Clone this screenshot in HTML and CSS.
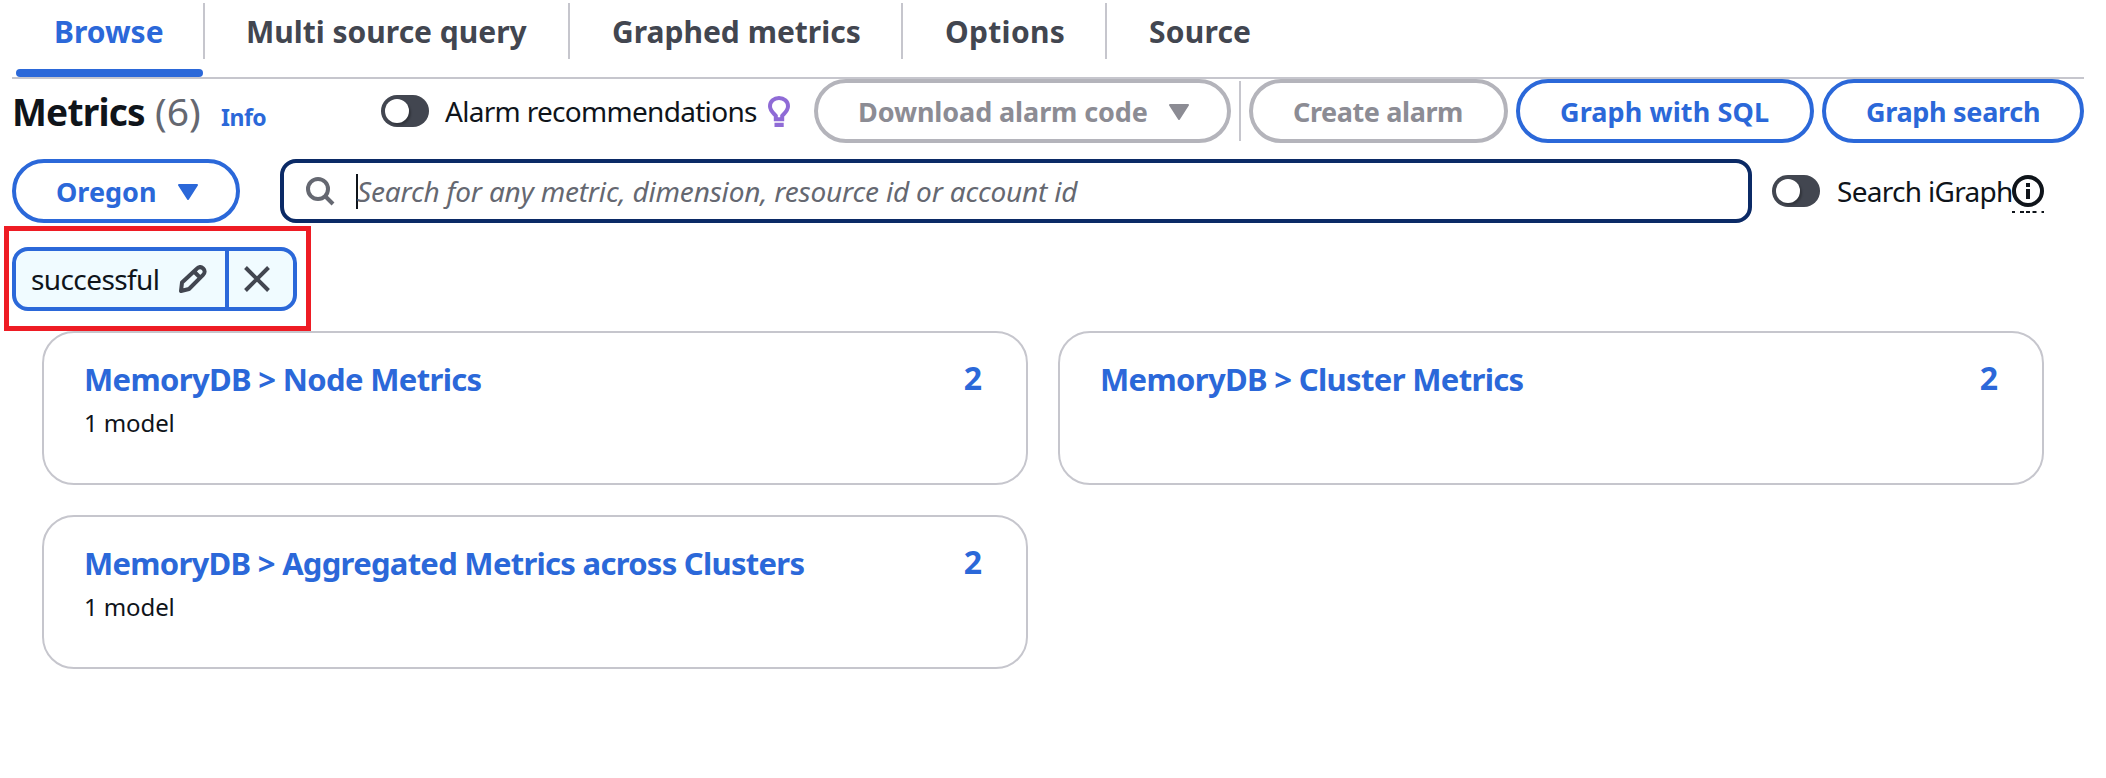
FILE: index.html
```html
<!DOCTYPE html>
<html lang="en">
<head>
<meta charset="utf-8">
<title>Metrics</title>
<link rel="stylesheet" href="styles.css">
</head>
<body>
<nav class="tabs">
  <a class="tab tab-browse active">Browse</a>
  <a class="tab tab-multi">Multi source query</a>
  <a class="tab tab-graphed">Graphed metrics</a>
  <a class="tab tab-options">Options</a>
  <a class="tab tab-source">Source</a>
</nav>
<header class="toolbar">
  <h1 class="heading"><span class="title">Metrics</span><span class="count">(6)</span><a class="info">Info</a></h1>
  <span class="toggle"><span class="knob"></span></span>
  <span class="label alarm-label">Alarm recommendations</span>
  <svg class="bulb" viewBox="0 0 22 31"><path d="M7.8 23.2v-3.4C5.6 17.3 2 14.8 2 10.3 2 5.4 6 2 11 2s9 3.4 9 8.3c0 4.5-3.600 7-5.800 9.500v3.400z" fill="none" stroke="#8f6bd6" stroke-width="4"/><path d="M6 19.600 11 23l5-3.400v5H6zM6.500 26.800h9.200v4.200H6.500z" fill="#8f6bd6"/></svg>
  <button class="btn disabled download">Download alarm code<svg class="caret" viewBox="0 0 20 16"><path d="M1 1h18l-9 14z"/></svg></button>
  <span class="divider"></span>
  <button class="btn disabled create">Create alarm</button>
  <button class="btn sql">Graph with SQL</button>
  <button class="btn search-btn">Graph search</button>
</header>
<section class="searchbar">
  <button class="btn region">Oregon<svg class="caret" viewBox="0 0 20 16"><path d="M1 1h18l-9 14z"/></svg></button>
  <div class="field">
    <svg class="lens" viewBox="0 0 29 29"><circle cx="12" cy="12" r="10" fill="none" stroke="#656871" stroke-width="4"/><path d="M18.500 18.500l8.500 8.500" stroke="#656871" stroke-width="4"/></svg>
    <span class="cursor"></span>
    <span class="placeholder">Search for any metric, dimension, resource id or account id</span>
  </div>
  <span class="toggle igraph-toggle"><span class="knob"></span></span>
  <span class="label igraph-label">Search iGraph</span>
  <span class="hint"><svg class="hint-icon" viewBox="0 0 32 32"><circle cx="16" cy="16" r="14" fill="none" stroke="#0f141a" stroke-width="4"/><path d="M14 8h4v4h-4zM14 14h4v10h-4z" fill="#0f141a"/></svg><svg class="dash" viewBox="0 0 32 2"><path d="M0 1h3M8 1h4M14 1h4M20.500 1h4M29.500 1h2.500" stroke="#0f141a" stroke-width="2"/></svg></span>
</section>
<section class="filters">
  <div class="chip">
    <span class="chip-text">successful</span>
    <svg class="pencil" viewBox="0 0 28 28"><path d="M2 26l1-8.500L17.800 3.700c2-2 4.400-2 6.400-.2 2 2 1.800 4.500-.1 6.400L10 24z M15 6.500l6.500 6.500" fill="none" stroke="#424650" stroke-width="4" stroke-linejoin="round"/></svg>
    <span class="remove"><svg class="cross" viewBox="0 0 26 26"><path d="M1.500 1.500l23 23M24.500 1.500l-23 23" stroke="#424650" stroke-width="4"/></svg></span>
  </div>
</section>
<main class="cards">
  <article class="card">
    <div class="card-main"><a class="card-title">MemoryDB &gt; Node Metrics</a><p class="sub">1 model</p></div>
    <span class="num">2</span>
  </article>
  <article class="card">
    <div class="card-main"><a class="card-title">MemoryDB &gt; Cluster Metrics</a></div>
    <span class="num">2</span>
  </article>
  <article class="card">
    <div class="card-main"><a class="card-title card-title-long">MemoryDB &gt; Aggregated Metrics across Clusters</a><p class="sub">1 model</p></div>
    <span class="num">2</span>
  </article>
</main>
</body>
</html>
```
FILE: styles.css
```css
* { box-sizing: border-box; }
body {
  margin: 0;
  background: #fff;
  color: #0f141a;
  font-family: "Noto Sans", "Open Sans", sans-serif;
  white-space: nowrap;
}
svg { display: block; flex: none; }

.tabs {
  display: flex;
  height: 79px;
  margin: 0 22px 0 12px;
  padding-top: 3px;
  border-bottom: 2px solid #c6c6cd;
}
.tab {
  position: relative;
  height: 56px;
  padding: 1px 0 0 41px;
  border-right: 2px solid #c6c6cd;
  font-size: 30px;
  font-weight: 700;
  line-height: 56px;
  color: #424650;
}
.tab-browse { width: 193px; padding-left: 42px; }
.tab-multi { width: 365px; }
.tab-graphed { width: 333px; padding-left: 42px; }
.tab-options { width: 204px; padding-left: 42px; letter-spacing: 0.3px; }
.tab-source { border: 0; padding-left: 42px; letter-spacing: 0.2px; }
.active { color: #2b68d9; }
.active::after {
  content: "";
  position: absolute;
  left: 4px;
  top: 66px;
  width: 187px;
  height: 8px;
  border-radius: 4px;
  background: #2b68d9;
}

.toolbar {
  display: flex;
  align-items: center;
  height: 64px;
  padding-left: 11px;
}
.heading {
  display: flex;
  align-items: baseline;
  width: 370px;
  margin: 0;
  padding-top: 5px;
  line-height: 59px;
}
.title { width: 143px; padding-left: 1px; font-size: 37px; letter-spacing: -0.8px; }
.count { width: 67px; padding-left: 1px; font-size: 39px; font-weight: 400; color: #656871; }
.info { font-size: 23px; letter-spacing: -0.5px; color: #2b68d9; }

.toggle {
  flex: none;
  width: 48px;
  height: 32px;
  padding: 4px;
  border-radius: 16px;
  background: #424650;
}
.knob {
  display: block;
  width: 24px;
  height: 24px;
  border-radius: 50%;
  background: #fff;
  box-shadow: 2px 2px 2px rgba(0, 0, 0, .25);
}
.label { font-size: 28px; letter-spacing: -0.7px; line-height: 64px; }
.alarm-label { width: 323px; margin-left: 16px; }
.bulb { width: 22px; height: 31px; }

.btn {
  display: flex;
  flex: none;
  align-items: center;
  height: 64px;
  margin: 0;
  padding: 1px 0 0 40px;
  border: 4px solid #2b68d9;
  border-radius: 32px;
  background: #fff;
  color: #2b68d9;
  font: 700 27px/55px "Noto Sans", "Open Sans", sans-serif;
}
.caret {
  width: 20px;
  height: 16px;
  fill: currentColor;
  stroke: currentColor;
  stroke-width: 2;
  stroke-linejoin: round;
}
.disabled { border-color: #b4b4bb; color: #8c8c94; }
.download { width: 417px; margin-left: 24px; letter-spacing: -0.1px; }
.download .caret { margin-left: 21px; }
.divider { width: 2px; height: 60px; margin: 0 8px; background: #c6c6cd; }
.create { width: 259px; letter-spacing: -0.4px; }
.sql { width: 298px; margin-left: 8px; letter-spacing: 0.1px; }
.search-btn { width: 262px; margin-left: 8px; letter-spacing: -0.3px; }

.searchbar {
  display: flex;
  align-items: center;
  height: 64px;
  margin: 16px 0 0 12px;
}
.region { width: 228px; }
.region .caret { margin-left: 21px; }
.field {
  display: flex;
  align-items: center;
  width: 1472px;
  height: 64px;
  margin-left: 40px;
  padding-left: 22px;
  border: 4px solid #0b2a66;
  border-radius: 16px;
}
.lens { width: 29px; height: 29px; }
.cursor { width: 2px; height: 35px; margin-left: 21px; background: #0f141a; }
.placeholder {
  margin-left: -1px;
  font-size: 28px;
  font-style: italic;
  letter-spacing: -0.18px;
  line-height: 56px;
  color: #656871;
}
.igraph-toggle { margin-left: 20px; }
.igraph-label { width: 175px; margin-left: 17px; }
.hint { display: flex; flex-direction: column; gap: 4px; padding-top: 6px; }
.hint-icon { width: 32px; height: 32px; }
.dash { width: 32px; height: 2px; }

.filters {
  width: 307px;
  height: 105px;
  margin: 3px 0 0 4px;
  padding: 16px 0 0 3px;
  border: 5px solid #ee1c24;
}
.chip {
  display: flex;
  align-items: center;
  width: 285px;
  height: 64px;
  padding-left: 15px;
  border: 4px solid #2b68d9;
  border-radius: 16px;
  background: #f0fbff;
}
.chip-text { width: 148px; font-size: 28px; letter-spacing: -0.6px; line-height: 56px; }
.pencil { width: 28px; height: 28px; }
.remove {
  display: flex;
  align-items: center;
  height: 56px;
  margin-left: 18px;
  padding-left: 15px;
  border-left: 4px solid #2b68d9;
}
.cross { width: 26px; height: 26px; }

.cards {
  display: grid;
  grid-template-columns: 986px 986px;
  grid-auto-rows: 154px;
  gap: 30px;
  margin-left: 42px;
}
.card {
  display: flex;
  justify-content: space-between;
  padding: 24px 44px 0 40px;
  border: 2px solid #c6c6cd;
  border-radius: 32px;
}
.card-title {
  display: block;
  font-size: 31px;
  font-weight: 700;
  letter-spacing: -0.66px;
  line-height: 44px;
  color: #2b68d9;
}
.card-title-long { letter-spacing: -0.72px; }
.sub { margin: 4px 0 0; font-size: 24px; letter-spacing: -0.1px; line-height: 36px; }
.num { font-size: 32px; font-weight: 700; line-height: 41px; color: #2b68d9; }
```
